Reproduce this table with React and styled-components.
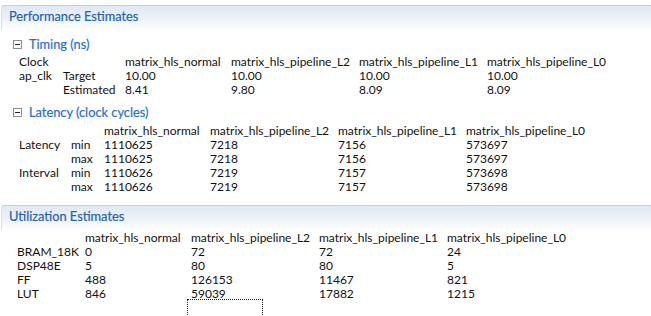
import React from "react";
import styled, { createGlobalStyle } from "styled-components";

const Global = createGlobalStyle`
  html, body { margin: 0; padding: 0; background: #fff; }
  body {
    font-family: Lato, "Noto Sans", "Liberation Sans", sans-serif;
    font-size: 12px;
    color: #111;
    width: 651px;
    height: 316px;
    overflow: hidden;
  }
`;

const Page = styled.div`
  display: flex;
  flex-direction: column;
  padding-top: 5px;
`;

const Section = styled.section`
  display: flex;
  flex-direction: column;
  margin-top: ${(p) => p.$top || 0}px;
`;

const SectionHeader = styled.div`
  margin-left: 1px;
  height: 25px;
  box-sizing: border-box;
  border-top: 1px solid #c2cfdd;
  border-left: 1px solid #d6dfea;
  border-top-left-radius: 3px;
  background: linear-gradient(to bottom, #dfe8f3 0%, #eef3f9 55%, #ffffff 100%);
  padding: 3px 0 0 7px;
`;

const SectionTitle = styled.span`
  font-size: 12.8px;
  line-height: 15px;
  font-weight: 400;
  color: #2262b6;
  -webkit-text-stroke: 0.2px #2262b6;
`;

const SubHeader = styled.div`
  display: flex;
  align-items: center;
  gap: 7px;
  padding-left: 13px;
  margin-top: ${(p) => p.$top}px;
  height: 16px;
`;

const Toggle = styled.span`
  width: 9px;
  height: 9px;
  box-sizing: border-box;
  border: 1px solid #8e8e8e;
  display: flex;
  align-items: center;
  justify-content: center;
  margin-top: 1px;
  &::after {
    content: "";
    width: 5px;
    height: 1px;
    background: #222;
  }
`;

const SubTitle = styled.span`
  font-size: 12.8px;
  line-height: 15px;
  color: #1f70d2;
  font-weight: 400;
  -webkit-text-stroke: 0.2px #1f70d2;
`;

const Grid = styled.div`
  display: grid;
  grid-template-columns: ${(p) => p.$cols};
  grid-auto-rows: 14px;
  padding-left: ${(p) => p.$left}px;
  margin-top: ${(p) => p.$top}px;
  font-size: 12px;
  line-height: 14px;
  white-space: nowrap;
`;

const Cell = styled.span`
  color: #111;
`;

const FocusRing = styled.div`
  margin-left: 187px;
  margin-top: -2px;
  width: 76px;
  height: 20px;
  box-sizing: border-box;
  border: 1px dotted #222;
  border-bottom: none;
`;

const impls = [
  "matrix_hls_normal",
  "matrix_hls_pipeline_L2",
  "matrix_hls_pipeline_L1",
  "matrix_hls_pipeline_L0",
];

const timingRows = [
  ["Clock", "", ...impls],
  ["ap_clk", "Target", "10.00", "10.00", "10.00", "10.00"],
  ["", "Estimated", "8.41", "9.80", "8.09", "8.09"],
];

const latencyRows = [
  ["", "", ...impls],
  ["Latency", "min", "1110625", "7218", "7156", "573697"],
  ["", "max", "1110625", "7218", "7156", "573697"],
  ["Interval", "min", "1110626", "7219", "7157", "573698"],
  ["", "max", "1110626", "7219", "7157", "573698"],
];

const utilRows = [
  ["", ...impls],
  ["BRAM_18K", "0", "72", "72", "24"],
  ["DSP48E", "5", "80", "80", "5"],
  ["FF", "488", "126153", "11467", "821"],
  ["LUT", "846", "59039", "17882", "1215"],
];

function DataGrid({ rows, cols, left, top }) {
  return (
    <Grid $cols={cols} $left={left} $top={top}>
      {rows.flatMap((r, i) => r.map((c, j) => <Cell key={`${i}-${j}`}>{c}</Cell>))}
    </Grid>
  );
}

export default function App() {
  return (
    <>
      <Global />
      <Page>
        <Section>
          <SectionHeader>
            <SectionTitle>Performance Estimates</SectionTitle>
          </SectionHeader>
          <SubHeader $top={6}>
            <Toggle />
            <SubTitle>Timing (ns)</SubTitle>
          </SubHeader>
          <DataGrid
            rows={timingRows}
            cols="44px 62px 106px 128px 128px auto"
            left={19}
            top={3}
          />
          <SubHeader $top={7}>
            <Toggle />
            <SubTitle>Latency (clock cycles)</SubTitle>
          </SubHeader>
          <DataGrid
            rows={latencyRows}
            cols="52px 33px 106px 128px 128px auto"
            left={19}
            top={4}
          />
        </Section>
        <Section $top={11}>
          <SectionHeader>
            <SectionTitle>Utilization Estimates</SectionTitle>
          </SectionHeader>
          <DataGrid
            rows={utilRows}
            cols="68px 106px 128px 128px auto"
            left={17}
            top={1}
          />
          <FocusRing />
        </Section>
      </Page>
    </>
  );
}
